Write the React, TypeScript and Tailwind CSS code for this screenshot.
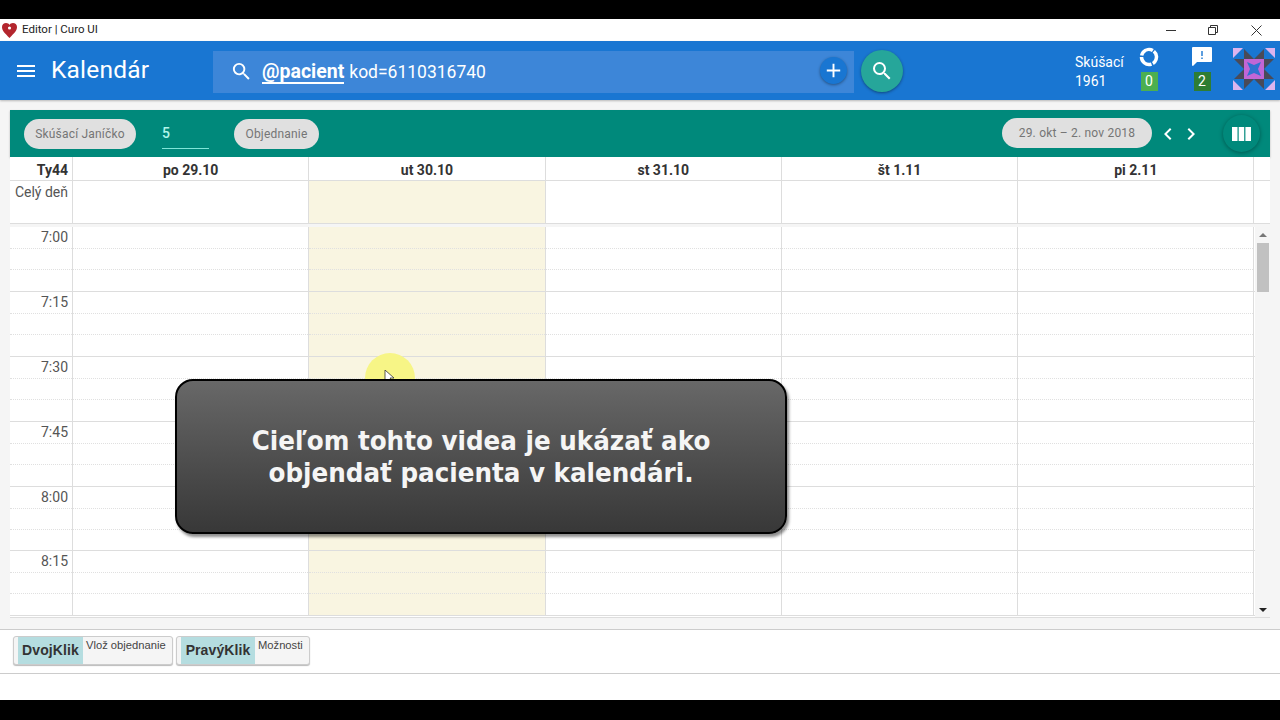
import { MdMenu, MdSearch, MdAdd, MdChevronLeft, MdChevronRight } from "react-icons/md";

const days = ["po 29.10", "ut 30.10", "st 31.10", "št 1.11", "pi 2.11"];
const times = ["7:00", "7:15", "7:30", "7:45", "8:00", "8:15"];

const Identicon = () => (
  <svg width="42" height="42" viewBox="0 0 42 42">
    <path d="M0 0h10L0 10zM42 0v10L32 0zM0 42V32l10 10zM42 42H32l10-10z" fill="#dcb4ee" />
    {[0, 90, 180, 270].map((r) => (
      <path key={r} transform={`rotate(${r} 21 21)`} d="M11 1l10 10H11zM21 11L31 1v10z" fill="#4a4a58" />
    ))}
    <rect x="11" y="11" width="20" height="20" fill="#c266d6" />
    <path d="M14 14l7 3 7-3-3 7 3 7-7-3-7 3 3-7z" fill="#2f72d0" />
  </svg>
);

const Chip = ({ children, w }: { children: string; w: string }) => (
  <div className={`h-[30px] rounded-full bg-[#e0e0e0] text-[#757575] text-[12px] flex items-center justify-center tracking-[0.2px] ${w}`}>
    {children}
  </div>
);

const Hint = ({ label, text, w, lw }: { label: string; text: string; w: string; lw: string }) => (
  <div className={`h-[29px] flex pl-[4px] rounded-[3px] border border-[#ccc] bg-[#f5f5f5] shadow-[0_1px_1px_#bbb] ${w}`}>
    <div className={`bg-[#b5dde0] h-full flex items-center justify-center text-[14px] font-bold tracking-[0.1px] text-[#333] ${lw}`}>{label}</div>
    <div className="pl-[3px] text-[11.200px] leading-[14px] pt-[1px] text-[#444] whitespace-nowrap">{text}</div>
  </div>
);

export default function App() {
  return (
    <div className="w-[1280px] h-[720px] bg-black flex flex-col py-[19px] pb-[20px] overflow-hidden relative font-['Roboto',sans-serif]">
      {/* title bar */}
      <div className="h-[22px] bg-white flex items-center shrink-0">
        <svg className="ml-[2px]" width="15" height="15" viewBox="0 0 24 24">
          <path d="M12 24C4 16 0 12 0 6.500 0 2.500 3 0 6.500 0 9 0 11 1.200 12 3c1-1.800 3-3 5.500-3C21 0 24 2.500 24 6.500 24 12 20 16 12 24z" fill="#b3262e" />
          <circle cx="12" cy="8" r="2.500" fill="#fff" />
        </svg>
        <span className="ml-[5px] text-[11.500px] text-[#222]">Editor | Curo UI</span>
        <div className="ml-auto flex items-center">
          <svg className="mr-[32px]" width="10" height="10" viewBox="0 0 10 10" stroke="#333" fill="none">
            <path d="M0 5.500h10" />
          </svg>
          <svg className="mr-[33px]" width="10" height="10" viewBox="0 0 10 10" stroke="#333" fill="none">
            <path d="M.5 2.500h7v7h-7zM2.500 2.500v-2h7v7h-2" />
          </svg>
          <svg className="mr-[18px]" width="11" height="11" viewBox="0 0 11 11" stroke="#333" fill="none">
            <path d="M.5.500l10 10M10.500.500l-10 10" />
          </svg>
        </div>
      </div>

      {/* blue header */}
      <div className="h-[59px] bg-[#1976d2] flex items-center shrink-0 shadow-[0_1px_2px_rgba(0,0,0,0.25)] z-10 text-white">
        <MdMenu size={24} className="ml-[14px]" />
        <div className="ml-[13px] w-[162px] text-[24.500px] tracking-[0.2px]">Kalendár</div>
        <div className="w-[641px] h-[42px] mt-[2px] bg-[#3d86d8] flex items-center">
          <MdSearch size={23} className="ml-[17px]" />
          <span className="ml-[9px] text-[19.500px] font-bold border-b-2 border-white leading-[21px] mt-[2px]">@pacient</span>
          <span className="ml-[5px] text-[17.500px] mt-[1px]">kod=6110316740</span>
          <div className="ml-auto mr-[7px] -mt-[2px] w-[27px] h-[27px] rounded-full bg-[#1976d2] shadow-[0_1px_3px_rgba(0,0,0,0.4)] flex items-center justify-center">
            <MdAdd size={23} />
          </div>
        </div>
        <div className="ml-[7px] w-[42px] h-[42px] rounded-full bg-[#26a69a] shadow-[0_1px_3px_rgba(0,0,0,0.4)] flex items-center justify-center">
          <MdSearch size={24} />
        </div>
        <div className="ml-[172px] w-[63px] text-[14px] leading-[19px] mt-[3px]">
          <div>Skúšací</div>
          <div>1961</div>
        </div>
        <div className="w-[22px] -mt-[3px] flex flex-col items-center gap-[5px]">
          <svg width="20" height="20" viewBox="0 0 20 20" fill="none" stroke="#fff" strokeWidth="3.500">
            <circle cx="10" cy="10" r="7.500" strokeDasharray="14.200 1.500 14.200 1.500 14.200 1.500" transform="rotate(-50 10 10)" />
          </svg>
          <div className="w-[17px] h-[19px] bg-[#4caf50] text-[14px] flex items-center justify-center">0</div>
        </div>
        <div className="ml-[31px] w-[22px] -mt-[3px] flex flex-col items-center gap-[5px]">
          <svg width="20" height="20" viewBox="0 0 20 20">
            <path d="M1 0h18a1 1 0 0 1 1 1v13a1 1 0 0 1-1 1H5l-4 4a1 1 0 0 1-1-1V1a1 1 0 0 1 1-1z" fill="#fff" />
            <path d="M9.300 4h1.400v5H9.300zM9.300 10.500h1.400V12H9.300z" fill="#1976d2" />
          </svg>
          <div className="w-[17px] h-[19px] bg-[#2e7d32] text-[14px] flex items-center justify-center">2</div>
        </div>
        <div className="ml-[20px] -mt-[4px]"><Identicon /></div>
      </div>

      {/* body */}
      <div className="h-[529px] bg-[#f5f5f5] shrink-0 pt-[10px] px-[10px]">
        <div className="h-[47px] bg-[#00897b] flex items-center text-white shadow-[0_1px_2px_rgba(0,0,0,0.25)]">
          <div className="ml-[14px]"><Chip w="w-[112px]">Skúšací Janíčko</Chip></div>
          <div className="ml-[26px] w-[47px] h-[30px] border-b border-[#80e5d8] text-[14px] text-[#b2f5ea] font-medium flex items-center mt-[1px]">5</div>
          <div className="ml-[25px]"><Chip w="w-[85px]">Objednanie</Chip></div>
          <div className="ml-auto -mt-[1px]"><Chip w="w-[150px]">29. okt – 2. nov 2018</Chip></div>
          <MdChevronLeft size={24} className="ml-[4px]" />
          <MdChevronRight size={24} className="-ml-[1px]" />
          <div className="ml-[20px] mr-[10px] w-[37px] h-[37px] rounded-full bg-[#00897b] shadow-[0_1px_4px_rgba(0,0,0,0.35)] flex items-center justify-center">
            <svg width="19" height="14" viewBox="0 0 19 14" fill="#fff">
              <rect width="5.500" height="14" />
              <rect x="6.700" width="5.500" height="14" />
              <rect x="13.400" width="5.600" height="14" />
            </svg>
          </div>
        </div>

        <div className="h-[461px] bg-white flex flex-col">
          {/* day headers */}
          <div className="h-[24px] flex border-b border-[#ddd] text-[14px] font-bold text-[#333] shrink-0">
            <div className="w-[63px] border-r border-[#ddd] text-right pr-[4px] pt-[3px]">Ty44</div>
            {days.map((d) => (
              <div key={d} className="w-[236.300px] border-r border-[#ddd] text-center pt-[3px]">{d}</div>
            ))}
          </div>
          {/* all day */}
          <div className="h-[43px] flex border-b border-[#ddd] shrink-0">
            <div className="w-[63px] border-r border-[#ddd] text-right pr-[4px] text-[14px] text-[#555] pt-[1px]">Celý deň</div>
            {days.map((d, i) => (
              <div key={d} className={`w-[236.300px] border-r border-[#ddd] ${i === 1 ? "bg-[#f9f5e1]" : ""}`} />
            ))}
          </div>
          <div className="h-[3px] bg-[#f5f5f5] shrink-0" />
          {/* time grid */}
          <div className="flex-1 flex overflow-hidden border-b border-[#ddd]">
            <div className="w-[1245px] shrink-0">
              {times.map((t) => (
                <div key={t} className="h-[64.900px] flex border-b border-[#ddd]">
                  <div className="w-[63px] border-r border-[#ddd] shrink-0 flex flex-col">
                    <div className="h-[22px] border-b border-dotted border-[#e0e0e0] text-right pr-[4px] text-[14px] leading-[20px] text-[#555]">{t}</div>
                    <div className="h-[21px] border-b border-dotted border-[#e0e0e0]" />
                  </div>
                  {days.map((d, i) => (
                    <div key={d} className={`w-[236.300px] shrink-0 border-r border-[#ddd] flex flex-col ${i === 1 ? "bg-[#f9f5e1]" : ""}`}>
                      <div className="h-[22px] border-b border-dotted border-[#e0e0e0]" />
                      <div className="h-[21px] border-b border-dotted border-[#e0e0e0]" />
                    </div>
                  ))}
                </div>
              ))}
            </div>
            {/* scrollbar */}
            <div className="w-[15px] flex flex-col items-center bg-[#f5f5f5]">
              <div className="mt-[6px] w-0 h-0 border-x-[4px] border-x-transparent border-b-[4px] border-b-[#777]" />
              <div className="mt-[6px] w-[12px] h-[49px] bg-[#c1c1c1]" />
              <div className="mt-auto mb-[5px] w-0 h-0 border-x-[4px] border-x-transparent border-t-[4px] border-t-[#222]" />
            </div>
          </div>
        </div>
      </div>

      {/* footer hints */}
      <div className="flex-1 bg-white border-t border-[#ccc] flex flex-col">
        <div className="h-[44px] border-b border-[#ccc] flex gap-[3px] pl-[13px] pt-[6px] font-['Liberation_Sans',sans-serif]">
          <Hint label="DvojKlik" text="Vlož objednanie" w="w-[160px]" lw="w-[65px]" />
          <Hint label="PravýKlik" text="Možnosti" w="w-[134px]" lw="w-[74px]" />
        </div>
      </div>

      {/* cursor highlight */}
      <div className="absolute left-[365px] top-[353px] w-[50px] h-[50px] rounded-full bg-[#f7f586]" />
      <svg className="absolute left-[384px] top-[370px]" width="12" height="14" viewBox="0 0 12 14">
        <path d="M1 0v12l3-3 3 4 2-1-3-4h4z" fill="#fff" stroke="#333" strokeWidth="0.8" />
      </svg>

      {/* video callout */}
      <div className="absolute left-[175px] top-[379px] w-[612px] h-[155px] rounded-[18px] border-2 border-black bg-gradient-to-b from-[#686868] to-[#383838] shadow-[2px_3px_3px_rgba(0,0,0,0.45)] flex items-center justify-center text-center text-[#f5f5f5] text-[27.400px] font-bold leading-[32px] font-['DejaVu_Sans_Condensed','DejaVu_Sans',sans-serif]">
        <div>
          Cieľom tohto videa je ukázať ako
          <br />
          objendať pacienta v kalendári.
        </div>
      </div>
    </div>
  );
}
